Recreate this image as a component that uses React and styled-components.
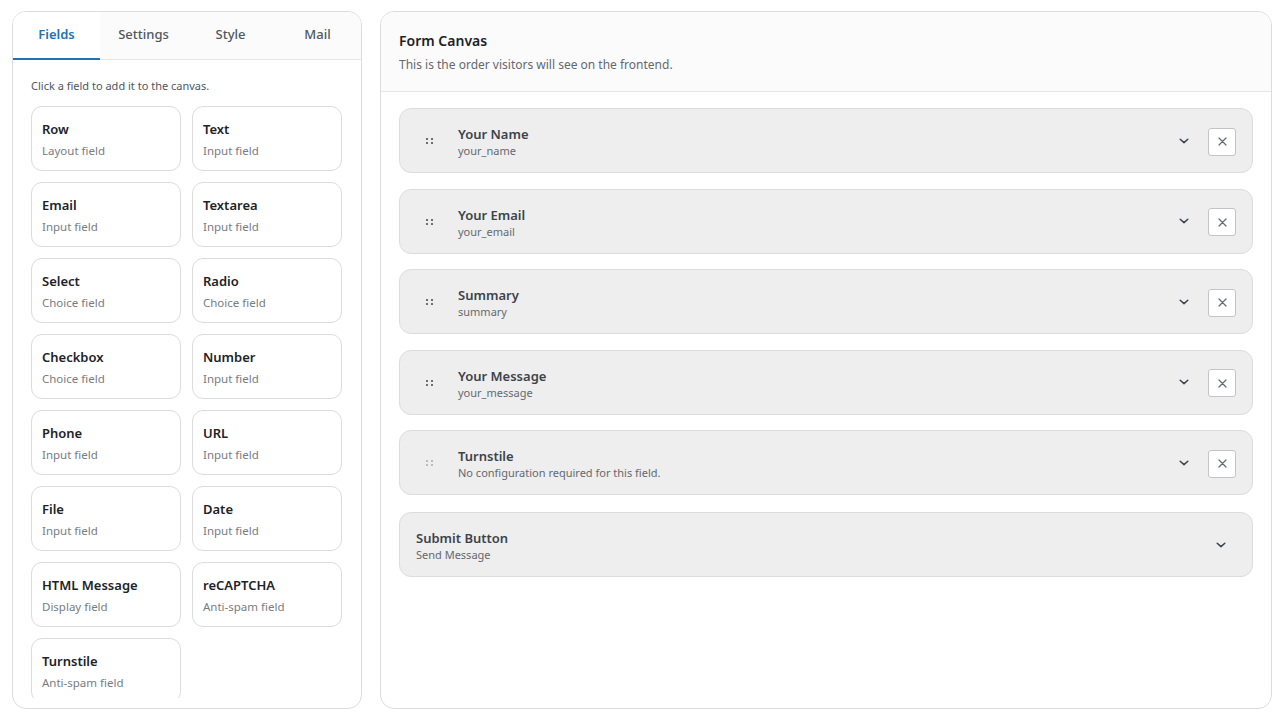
import React from 'react'
import styled, {createGlobalStyle} from 'styled-components'

const Global = createGlobalStyle`
  html, body { margin: 0; padding: 0; background: #fff; }
  body { font-family: "Noto Sans", "Open Sans", sans-serif; color: #1e1e1e; }
  * { box-sizing: border-box; }
`

const Page = styled.div`
  display: flex;
  gap: 18px;
  height: 720px;
  padding: 11px 8px 11px 12px;
`

const Sidebar = styled.aside`
  width: 350px;
  flex: none;
  display: flex;
  flex-direction: column;
  border: 1px solid #dcdcde;
  border-radius: 14px;
  overflow: hidden;
  background: #fff;
  padding-bottom: 10px;
`

const Tabs = styled.div`
  display: flex;
  height: 48px;
  border-bottom: 1px solid #e5e5e5;
  background: #fbfbfb;
  flex: none;
`

const Tab = styled.button`
  flex: 1;
  border: 0;
  background: ${p => (p.active ? '#fff' : 'transparent')};
  font: inherit;
  font-size: 13px;
  font-weight: ${p => (p.active ? 600 : 500)};
  color: ${p => (p.active ? '#2271b1' : '#50575e')};
  border-bottom: 2px solid ${p => (p.active ? '#2271b1' : 'transparent')};
  margin-bottom: -1px;
  padding: 0 0 2px;
  cursor: pointer;
`

const FieldList = styled.div`
  flex: 1;
  overflow: hidden;
  padding: 18px 18px 0;
`

const Hint = styled.p`
  margin: 0 0 13px;
  font-size: 11px;
  color: #50575e;
`

const FieldGrid = styled.div`
  display: grid;
  grid-template-columns: 150px 150px;
  gap: 11px;
`

const FieldCard = styled.div`
  height: 65px;
  border: 1px solid #dcdcde;
  border-radius: 11px;
  padding: 14px 10px 0;
  background: #fff;
  cursor: pointer;
`

const FieldName = styled.div`
  font-size: 13px;
  font-weight: 600;
  color: #1d2327;
  line-height: 17px;
`

const FieldType = styled.div`
  margin-top: 5px;
  font-size: 11.5px;
  color: #787c82;
  line-height: 15px;
`

const Canvas = styled.section`
  flex: 1;
  border: 1px solid #dcdcde;
  border-radius: 14px;
  overflow: hidden;
  background: #fff;
`

const CanvasHead = styled.header`
  height: 80px;
  padding: 19px 18px 0;
  background: #fbfbfb;
  border-bottom: 1px solid #e5e5e5;
`

const CanvasTitle = styled.h2`
  margin: 0;
  font-size: 14px;
  font-weight: 600;
  color: #1d2327;
  line-height: 19px;
`

const CanvasSub = styled.p`
  margin: 6px 0 0;
  font-size: 12px;
  color: #646970;
`

const Rows = styled.div`
  display: flex;
  flex-direction: column;
  gap: 15.5px;
  padding: 16px 18px;
`

const Row = styled.div`
  height: 65px;
  display: flex;
  align-items: center;
  padding: 0 16px 0 ${p => (p.fixed ? '16px' : '26px')};
  background: #eeeeee;
  border: 1px solid #dcdcde;
  border-radius: 12px;
  margin-top: ${p => (p.fixed ? '1.5px' : '0')};
`

const Handle = styled.span`
  width: 10px;
  display: grid;
  grid-template-columns: 2px 2px;
  gap: 2px 3px;
  margin-right: 22px;
  margin-top: 1px;
  span {
    width: 2px;
    height: 2px;
    border-radius: 1px;
    background: ${p => (p.muted ? '#a7aaad' : '#3c434a')};
  }
`

const RowText = styled.div`
  flex: 1;
  min-width: 0;
  padding-top: 2px;
`

const RowTitle = styled.div`
  font-size: 13px;
  font-weight: 600;
  color: #3c434a;
  line-height: 18px;
`

const RowSub = styled.div`
  font-size: 11px;
  color: #646970;
  line-height: 15px;
`

const Chevron = styled.span`
  display: flex;
  width: 14px;
  justify-content: center;
  color: #3c434a;
  margin-right: ${p => (p.last ? '8px' : '17px')};
`

const RemoveButton = styled.button`
  width: 28px;
  height: 28px;
  border: 1px solid #c3c4c7;
  border-radius: 3px;
  background: #fff;
  color: #646970;
  display: flex;
  align-items: center;
  justify-content: center;
  padding: 0;
  margin-top: 2px;
`

const fields = [
  ['Row', 'Layout field'],
  ['Text', 'Input field'],
  ['Email', 'Input field'],
  ['Textarea', 'Input field'],
  ['Select', 'Choice field'],
  ['Radio', 'Choice field'],
  ['Checkbox', 'Choice field'],
  ['Number', 'Input field'],
  ['Phone', 'Input field'],
  ['URL', 'Input field'],
  ['File', 'Input field'],
  ['Date', 'Input field'],
  ['HTML Message', 'Display field'],
  ['reCAPTCHA', 'Anti-spam field'],
  ['Turnstile', 'Anti-spam field'],
]

const canvasRows = [
  {title: 'Your Name', sub: 'your_name'},
  {title: 'Your Email', sub: 'your_email'},
  {title: 'Summary', sub: 'summary'},
  {title: 'Your Message', sub: 'your_message'},
  {title: 'Turnstile', sub: 'No configuration required for this field.', muted: true},
]

const ChevronIcon = () => (
  <svg width="10" height="6" viewBox="0 0 10 6" fill="none">
    <path d="M1.2 1.2L5 4.6l3.8-3.4" stroke="currentColor" strokeWidth="1.5" strokeLinecap="round" strokeLinejoin="round"/>
  </svg>
)

const CloseIcon = () => (
  <svg width="9" height="9" viewBox="0 0 9 9" fill="none">
    <path d="M1 1l7 7M8 1L1 8" stroke="currentColor" strokeWidth="1.2" strokeLinecap="round"/>
  </svg>
)

function App() {
  return (
    <Page>
      <Global/>
      <Sidebar>
        <Tabs>
          <Tab active>Fields</Tab>
          <Tab>Settings</Tab>
          <Tab>Style</Tab>
          <Tab>Mail</Tab>
        </Tabs>
        <FieldList>
          <Hint>Click a field to add it to the canvas.</Hint>
          <FieldGrid>
            {fields.map(([name, type]) => (
              <FieldCard key={name}>
                <FieldName>{name}</FieldName>
                <FieldType>{type}</FieldType>
              </FieldCard>
            ))}
          </FieldGrid>
        </FieldList>
      </Sidebar>

      <Canvas>
        <CanvasHead>
          <CanvasTitle>Form Canvas</CanvasTitle>
          <CanvasSub>This is the order visitors will see on the frontend.</CanvasSub>
        </CanvasHead>
        <Rows>
          {canvasRows.map(r => (
            <Row key={r.title}>
              <Handle muted={r.muted}>
                <span/><span/><span/><span/>
              </Handle>
              <RowText>
                <RowTitle>{r.title}</RowTitle>
                <RowSub>{r.sub}</RowSub>
              </RowText>
              <Chevron><ChevronIcon/></Chevron>
              <RemoveButton aria-label="Remove"><CloseIcon/></RemoveButton>
            </Row>
          ))}
          <Row fixed>
            <RowText>
              <RowTitle>Submit Button</RowTitle>
              <RowSub>Send Message</RowSub>
            </RowText>
            <Chevron last><ChevronIcon/></Chevron>
          </Row>
        </Rows>
      </Canvas>
    </Page>
  )
}

export default App
